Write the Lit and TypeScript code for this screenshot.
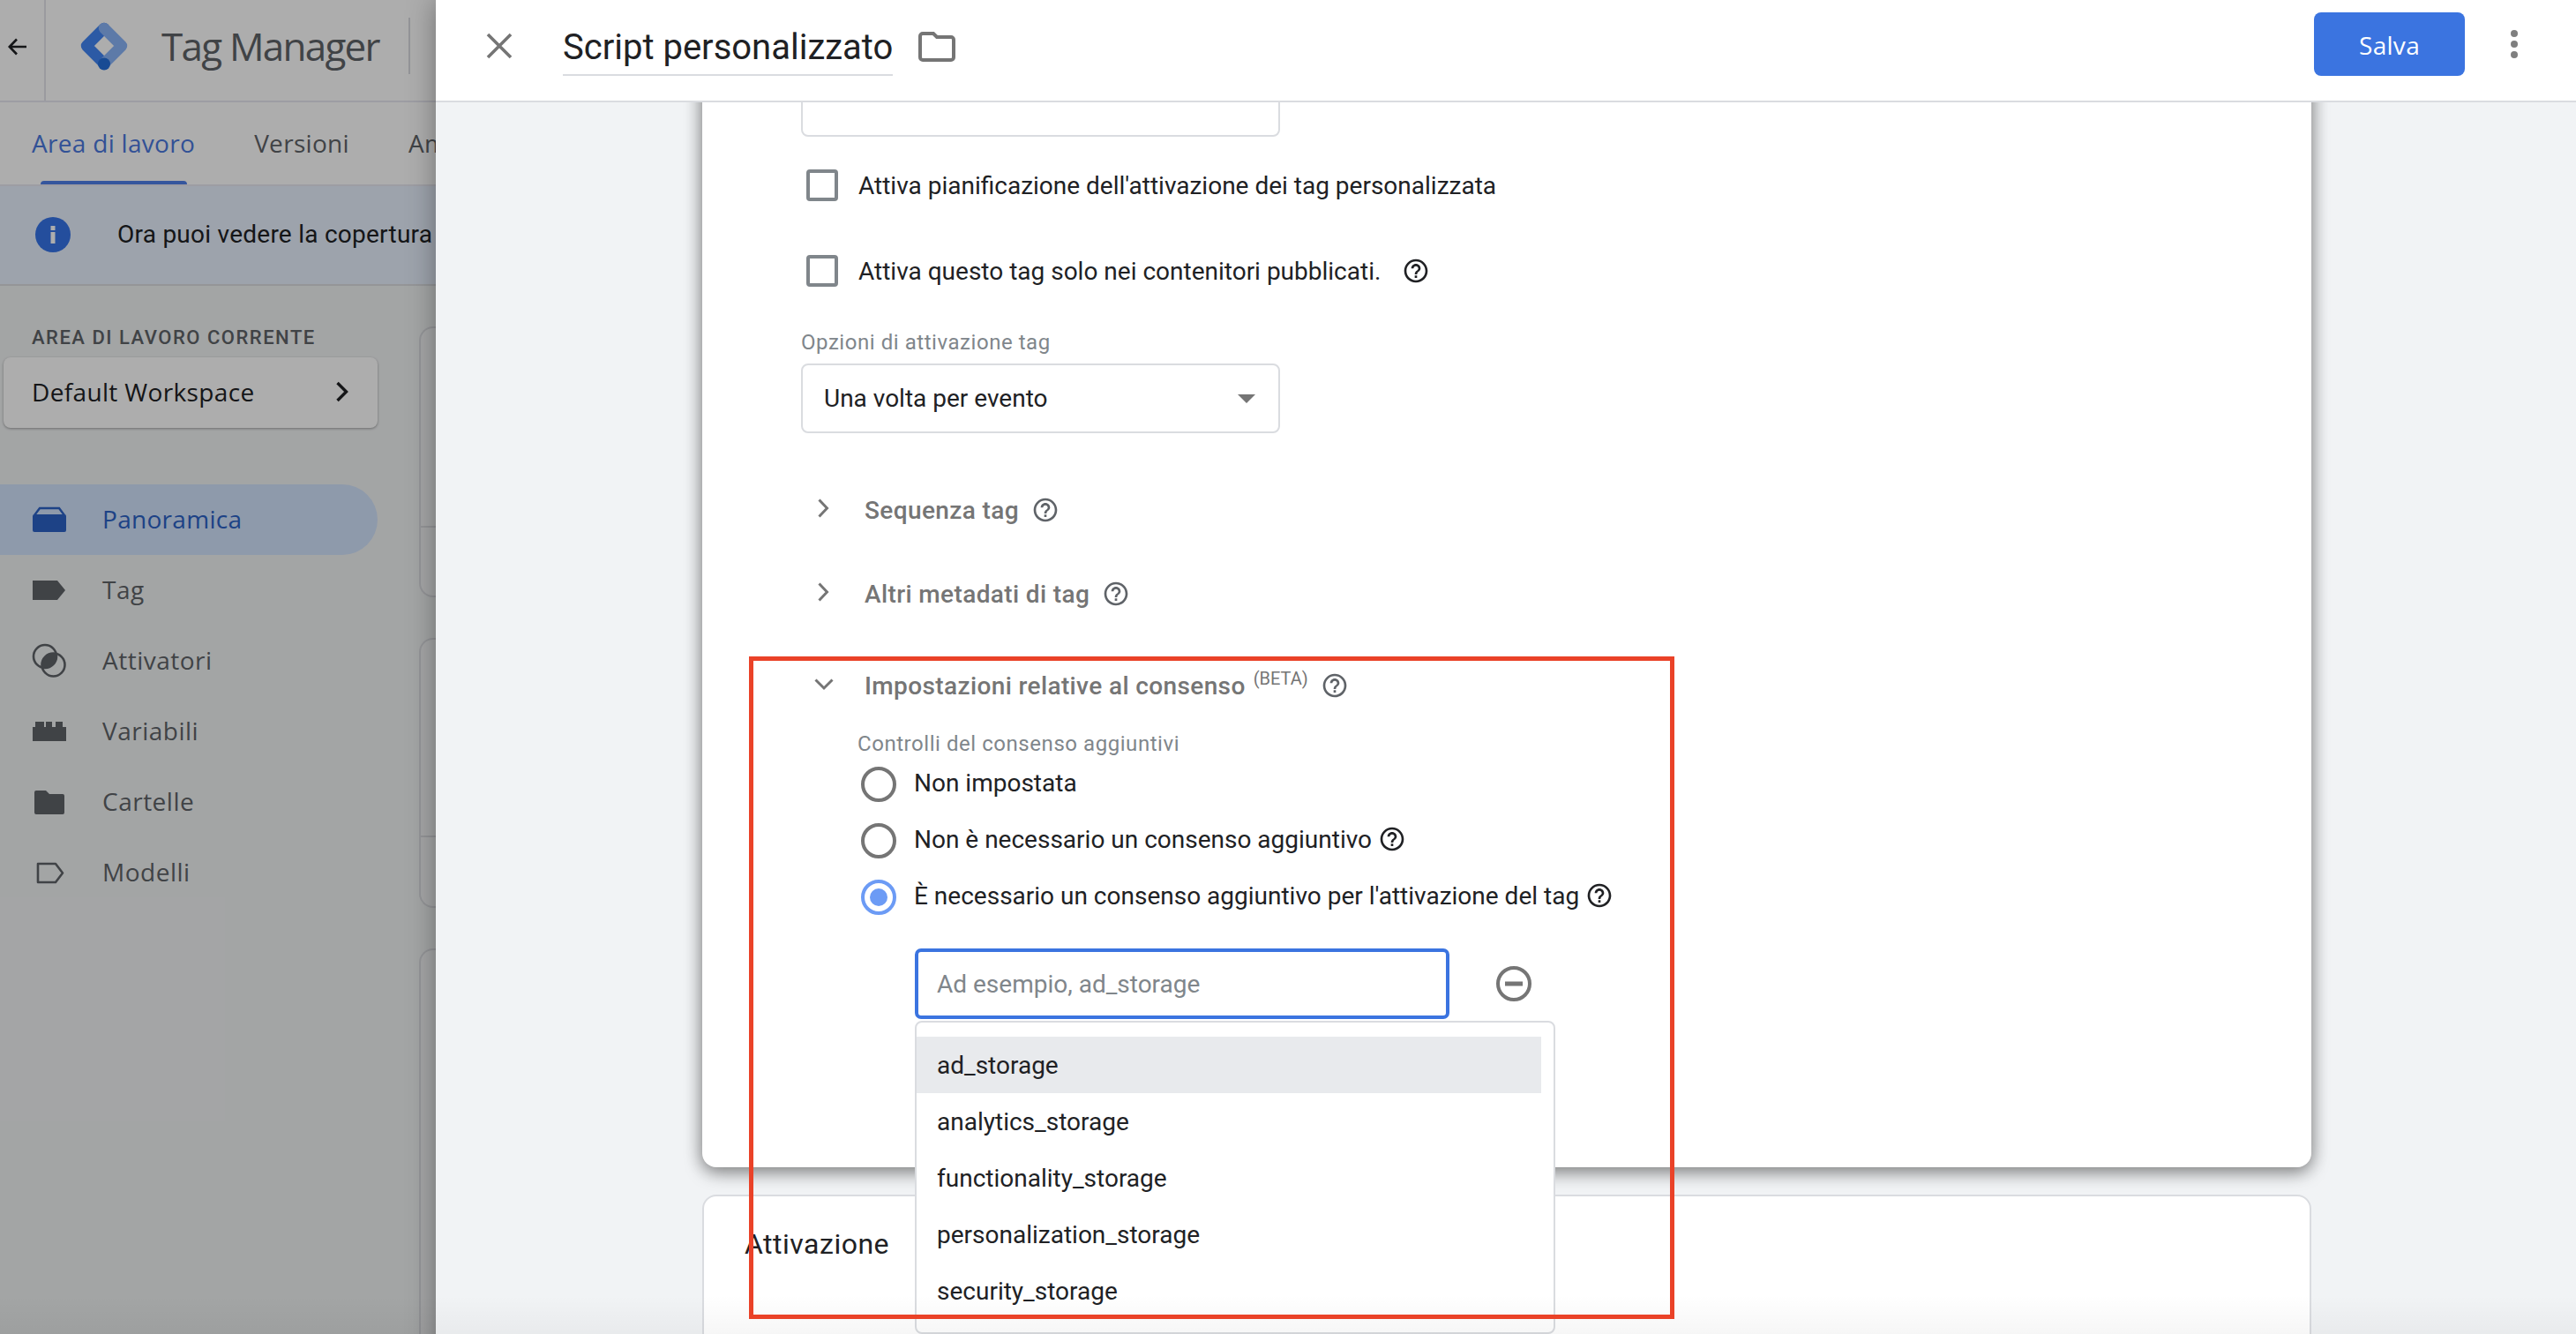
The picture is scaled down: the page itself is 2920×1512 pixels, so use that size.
import { LitElement, html, css, svg } from "lit";
import { customElement } from "lit/decorators.js";

const help = (cls = "") => html`<svg class="help ${cls}" viewBox="0 0 24 24"><path d="M11 18h2v-2h-2v2zm1-16C6.48 2 2 6.48 2 12s4.48 10 10 10 10-4.48 10-10S17.52 2 12 2zm0 18c-4.41 0-8-3.59-8-8s3.59-8 8-8 8 3.59 8 8-3.59 8-8 8zm0-14c-2.21 0-4 1.79-4 4h2c0-1.1.9-2 2-2s2 .9 2 2c0 2-3 1.75-3 5h2c0-2.25 3-2.5 3-5 0-2.21-1.79-4-4-4z"/></svg>`;

const navIcons = {
  overview: svg`<path d="M3 15 L9 7 H31 L37 15" fill="none" stroke="currentColor" stroke-width="2.4"/><rect x="1" y="14" width="38" height="20" rx="2" fill="currentColor"/>`,
  tag: svg`<path d="M1 9 H29 L38 20 L29 31 H1 Z" fill="currentColor"/>`,
  trigger: svg`<circle cx="15" cy="15" r="13" fill="none" stroke="currentColor" stroke-width="2.6"/><circle cx="24.5" cy="24.5" r="13" fill="none" stroke="currentColor" stroke-width="2.6"/><path d="M27.63 11.87 A13 13 0 0 1 11.87 27.63 A13 13 0 0 1 27.63 11.87 Z" fill="currentColor"/>`,
  variable: svg`<path d="M1 15 H4 V9 H14 V15 H16 V9 H23 V15 H27 V9 H35 V15 H39 V31 H1 Z" fill="currentColor"/>`,
  folder: svg`<path d="M5 7 H16 L20 11 H35 a2 2 0 0 1 2 2 V32 a2 2 0 0 1-2 2 H5 a2 2 0 0 1-2-2 V9 a2 2 0 0 1 2-2 Z" fill="currentColor"/>`,
  template: svg`<path d="M7 10 H27 L35 20.5 L27 31 H7 Z" fill="none" stroke="currentColor" stroke-width="2.6" stroke-linejoin="round"/>`,
};

const nav: [keyof typeof navIcons, string][] = [
  ["overview", "Panoramica"],
  ["tag", "Tag"],
  ["trigger", "Attivatori"],
  ["variable", "Variabili"],
  ["folder", "Cartelle"],
  ["template", "Modelli"],
];

const consentTypes = ["ad_storage", "analytics_storage", "functionality_storage", "personalization_storage", "security_storage"];

@customElement("app-root")
export class AppRoot extends LitElement {
  static styles = css`
    :host { display: block; width: 2920px; height: 1512px; overflow: hidden; position: relative; background: #fff; font-family: Roboto, sans-serif; color: #202124; font-size: 28px; }
    * { box-sizing: border-box; }
    .page { display: grid; grid-template-columns: 494px 1fr; width: 100%; height: 100%; }

    /* dimmed background app */
    .bg { position: relative; overflow: hidden; background: #f1f3f4; display: flex; flex-direction: column; font-family: "Open Sans", sans-serif; }
    .dim { position: absolute; inset: 0; background: rgba(0,0,0,.32); z-index: 5; }
    .top { height: 116px; flex: none; background: #fff; border-bottom: 2px solid #e8e8f0; display: flex; align-items: center; width: 700px; }
    .back { width: 52px; height: 114px; flex: none; border-right: 2px solid #e3e3ea; display: flex; align-items: center; justify-content: center; color: #202124; padding-bottom: 8px; }
    .back svg { width: 24px; height: 24px; margin-right: 10px; }
    .logo { width: 58px; height: 58px; margin: -10px 0 0 37px; flex: none; }
    .brand { margin: -10px 0 0 36px; font-size: 44px; color: #5f6368; letter-spacing: -1.75px; white-space: nowrap; width: 280px; }
    .top-div { width: 2px; height: 64px; background: #dadce0; margin-top: -10px; }
    .tabs { height: 95px; flex: none; background: #fff; border-bottom: 2px solid #e8e8f0; display: flex; width: 700px; padding-left: 36px; gap: 67px; align-items: center; font-size: 28px; letter-spacing: .3px; color: #5f6368; font-weight: 500; white-space: nowrap; }
    .tab { position: relative; height: 93px; line-height: 93px; }
    .tab.on { color: #4a78dd; }
    .tab.on::after { content: ""; position: absolute; left: 10px; right: 9px; bottom: 0; height: 4px; background: #4f7fe8; border-radius: 4px 4px 0 0; }
    .banner { height: 113px; flex: none; background: #e8f0fe; border-bottom: 2px solid #dadce0; display: flex; align-items: center; width: 700px; padding: 0 0 2px 40px; font-family: Roboto, sans-serif; white-space: nowrap; letter-spacing: .25px; }
    .banner svg { width: 40px; height: 40px; margin-right: 53px; flex: none; }
    .work { display: flex; flex: 1; min-height: 0; }
    .side { width: 475px; flex: none; padding-top: 46px; }
    .cap { padding-left: 36px; font-size: 22px; line-height: 26px; font-family: Roboto, sans-serif; font-weight: 500; letter-spacing: 1.5px; color: #5f6368; white-space: nowrap; }
    .ws { margin: 9px 0 0 4px; width: 424px; height: 80px; background: #fff; border-radius: 8px; box-shadow: 0 1px 3px rgba(0,0,0,.35); display: flex; align-items: center; justify-content: space-between; padding: 0 32px 2px 32px; font-size: 28px; font-weight: 500; letter-spacing: .35px; color: #202124; white-space: nowrap; }
    .ws svg { width: 16px; height: 26px; }
    .nav { margin-top: 64px; width: 428px; }
    .item { height: 80px; display: flex; align-items: center; padding-left: 36px; color: #5f6368; border-radius: 0 40px 40px 0; font-size: 28px; letter-spacing: .5px; }
    .item span { margin-top: -3px; }
    .item svg { width: 40px; height: 40px; margin-right: 40px; flex: none; }
    .item.on { background: #d2e3fc; color: #2b62c6; font-weight: 500; letter-spacing: .3px; }
    .item.on svg { color: #2b62c6; }
    .cards { flex: 1; display: flex; flex-direction: column; padding-top: 46px; width: 40px; }
    .bgc { width: 60px; flex: none; background: #f4f5f6; border: 2px solid #dadce0; border-right: 0; border-radius: 16px 0 0 16px; position: relative; }
    .bgc.a { height: 307px; }
    .bgc.b { height: 306px; margin-top: 46px; }
    .bgc.c { height: 500px; margin-top: 46px; }
    .bgc i { position: absolute; left: 0; right: 0; height: 2px; background: #dadce0; }

    /* slide-over panel */
    .panel { position: relative; z-index: 6; display: flex; flex-direction: column; background: #f1f3f5; box-shadow: 0 0 30px rgba(0,0,0,.35); min-width: 0; }
    .bar { height: 116px; flex: none; background: #fff; border-bottom: 2px solid #dadce0; display: flex; align-items: center; position: relative; z-index: 3; padding-left: 56px; }
    .close { width: 32px; height: 32px; flex: none; margin-top: -10px; }
    .title { margin-left: 56px; font-size: 40px; line-height: 56px; border-bottom: 2px solid #dadce0; height: 60px; margin-top: -2px; color: #202124; white-space: nowrap; }
    .fold { width: 42px; height: 34px; margin-left: 29px; flex: none; margin-top: -8px; }
    .save { margin-left: auto; width: 171px; height: 72px; margin-top: -14px; background: #3b74e0; color: #fff; border-radius: 8px; display: flex; align-items: center; justify-content: center; font-family: "Open Sans", sans-serif; font-weight: 500; font-size: 28px; letter-spacing: .3px; padding-top: 2px; }
    .kebab { width: 8px; margin: -14px 66px 0 52px; display: flex; flex-direction: column; gap: 4px; flex: none; }
    .kebab i { width: 8px; height: 8px; border-radius: 50%; background: #7f7f7f; }
    .body { flex: 1; min-height: 0; overflow: hidden; padding: 0 300px 0 302px; }
    .card1 { position: relative; z-index: 2; margin-top: -100px; background: #fff; border-radius: 16px; box-shadow: 0 6px 20px rgba(0,0,0,.4), 0 0 20px rgba(0,0,0,.2); padding: 60px 0 168px 112px; height: 1307px; }
    .oldinput { width: 543px; height: 79px; border: 2px solid #dadce0; border-radius: 8px; }
    .check { display: flex; align-items: center; height: 60px; white-space: nowrap; }
    .check.one { margin-top: 25px; }
    .check.two { margin-top: 37px; }
    .box { width: 36px; height: 36px; margin: 0 23px 0 6px; border: 4px solid #80868b; border-radius: 4px; flex: none; }
    .help { width: 32px; height: 32px; fill: #202124; flex: none; display: block; }
    .help.soft { fill: #5f6368; }
    .check .help { margin-left: 24px; }
    .lab { font-size: 24px; line-height: 30px; height: 30px; color: #80868b; margin-top: 36px; white-space: nowrap; letter-spacing: .55px; }
    .select { margin-top: 9px; width: 543px; height: 79px; border: 2px solid #dadce0; border-radius: 8px; display: flex; align-items: center; justify-content: space-between; padding: 0 26px 0 24px; }
    .caret { width: 0; height: 0; border-left: 10px solid transparent; border-right: 10px solid transparent; border-top: 10px solid #757575; }
    .sec { display: flex; align-items: center; height: 60px; font-weight: 500; color: #757575; white-space: nowrap; letter-spacing: .38px; }
    .sec.s1 { margin-top: 57px; }
    .sec.s2 { margin-top: 35px; }
    .sec.s3 { margin-top: 44px; margin-bottom: -1px; }
    .sec .chev { width: 24px; height: 24px; margin: -4px 34px 0 14px; flex: none; }
    .sec .help { margin-left: 14px; }
    sup { font-size: 20px; font-weight: 400; line-height: 0; position: relative; top: -8px; vertical-align: baseline; margin-left: 9px; letter-spacing: 0; }
    .consent { padding-left: 64px; }
    .consent .lab { margin-top: 23px; height: 28px; line-height: 28px; }
    .radio { display: flex; align-items: center; height: 64px; white-space: nowrap; }
    .rd { width: 40px; height: 40px; border-radius: 50%; border: 4px solid #757575; margin: 0 20px 0 4px; flex: none; position: relative; }
    .rd.on { border-color: #6c9bf5; }
    .rd.on::after { content: ""; position: absolute; inset: 6px; border-radius: 50%; background: #6c9bf5; }
    .radio span { margin-top: -4px; }
    .radio .help { margin: -4px 0 0 7px; }
    .inrow { position: relative; display: flex; align-items: center; margin: 26px 0 0 65px; }
    .focus { width: 606px; height: 80px; border: 4px solid #3b74e0; border-radius: 7px; display: flex; align-items: center; padding: 0 0 0 21px; color: #80868b; }
    .minus { width: 48px; height: 48px; margin-left: 49px; flex: none; }
    .menu { position: absolute; left: 0; top: 82px; width: 726px; height: 355px; background: #fff; border: 2px solid #dadce0; border-radius: 8px; padding-top: 16px; overflow: hidden; z-index: 4; }
    .opt { width: 708px; height: 64px; padding-left: 23px; display: flex; align-items: center; color: #202124; }
    .opt.on { background: #e8eaed; }
    .card2 { position: relative; z-index: 1; margin-top: 31px; height: 300px; background: #fff; border: 2px solid #dadce0; border-radius: 16px; padding: 26px 0 0 46px; font-size: 32px; line-height: 56px; letter-spacing: .5px; }
    .shade { position: absolute; left: 0; right: 0; bottom: 0; height: 44px; background: linear-gradient(to bottom, rgba(0,0,0,0), rgba(0,0,0,.035)); z-index: 20; pointer-events: none; }
    .mark { position: absolute; left: 849px; top: 744px; width: 1049px; height: 751px; border: 5px solid #ea4228; z-index: 21; pointer-events: none; }
  `;

  render() {
    return html`
      <div class="page">
        <div class="bg">
          <div class="top">
            <div class="back"><svg viewBox="0 0 24 24"><path d="M22 12H3M11 3.5 2.8 12l8.2 8.500" fill="none" stroke="currentColor" stroke-width="2.600"/></svg></div>
            <svg class="logo" viewBox="0 0 58 58">
              <path d="M29 9 L9 29 L29 49" fill="none" stroke="#4285f4" stroke-width="12.400" stroke-linecap="round" stroke-linejoin="round"/>
              <path d="M29 9 L49 29 L29 49" fill="none" stroke="#8ab4f8" stroke-width="12.400" stroke-linecap="round" stroke-linejoin="round"/>
              <circle cx="29" cy="49.500" r="7" fill="#246fdb"/>
            </svg>
            <div class="brand">Tag Manager</div>
            <div class="top-div"></div>
          </div>
          <div class="tabs">
            <div class="tab on">Area di lavoro</div>
            <div class="tab">Versioni</div>
            <div class="tab">Amministrazione</div>
          </div>
          <div class="banner">
            <svg viewBox="0 0 40 40"><circle cx="20" cy="20" r="20" fill="#3674e8"/><rect x="17.500" y="17" width="5" height="13" fill="#fff"/><rect x="17.500" y="10" width="5" height="5" fill="#fff"/></svg>
            Ora puoi vedere la copertura dei tag
          </div>
          <div class="work">
            <div class="side">
              <div class="cap">AREA DI LAVORO CORRENTE</div>
              <div class="ws">Default Workspace
                <svg viewBox="0 0 16 26"><path d="M2.500 3 12.500 13 2.500 23" fill="none" stroke="#202124" stroke-width="3.400"/></svg>
              </div>
              <div class="nav">
                ${nav.map(([ic, label], i) => html`<div class="item ${i === 0 ? "on" : ""}"><svg viewBox="0 0 40 40">${navIcons[ic]}</svg><span>${label}</span></div>`)}
              </div>
            </div>
            <div class="cards">
              <div class="bgc a"><i style="top: 224px"></i></div>
              <div class="bgc b"><i style="top: 222px"></i></div>
              <div class="bgc c"></div>
            </div>
          </div>
          <div class="dim"></div>
        </div>

        <div class="panel">
          <div class="bar">
            <svg class="close" viewBox="0 0 32 32"><path d="M3 3 29 29M29 3 3 29" fill="none" stroke="#757575" stroke-width="3.600"/></svg>
            <div class="title">Script personalizzato</div>
            <svg class="fold" viewBox="0 0 42 34"><path d="M5 2 H17 L21 6 H37 a3 3 0 0 1 3 3 V29 a3 3 0 0 1-3 3 H5 a3 3 0 0 1-3-3 V5 a3 3 0 0 1 3-3 Z" fill="none" stroke="#757575" stroke-width="4"/></svg>
            <div class="save">Salva</div>
            <div class="kebab"><i></i><i></i><i></i></div>
          </div>
          <div class="body">
            <div class="card1">
              <div class="oldinput"></div>
              <div class="check one"><div class="box"></div>Attiva pianificazione dell'attivazione dei tag personalizzata</div>
              <div class="check two"><div class="box"></div>Attiva questo tag solo nei contenitori pubblicati.${help()}</div>
              <div class="lab">Opzioni di attivazione tag</div>
              <div class="select">Una volta per evento<div class="caret"></div></div>
              <div class="sec s1"><svg class="chev" viewBox="0 0 24 24"><path d="M6.500 2.500 15.500 12 6.500 21.500" fill="none" stroke="#757575" stroke-width="3"/></svg>Sequenza tag${help("soft")}</div>
              <div class="sec s2"><svg class="chev" viewBox="0 0 24 24"><path d="M6.500 2.500 15.500 12 6.500 21.500" fill="none" stroke="#757575" stroke-width="3"/></svg>Altri metadati di tag${help("soft")}</div>
              <div class="sec s3"><svg class="chev" viewBox="0 0 24 24"><path d="M2.500 7.500 12 17 21.500 7.500" fill="none" stroke="#757575" stroke-width="3"/></svg>Impostazioni relative al consenso<sup>(BETA)</sup>${help("soft")}</div>
              <div class="consent">
                <div class="lab">Controlli del consenso aggiuntivi</div>
                <div class="radio"><div class="rd"></div><span>Non impostata</span></div>
                <div class="radio"><div class="rd"></div><span>Non è necessario un consenso aggiuntivo</span>${help()}</div>
                <div class="radio"><div class="rd on"></div><span>È necessario un consenso aggiuntivo per l'attivazione del tag</span>${help()}</div>
                <div class="inrow">
                  <div class="focus">Ad esempio, ad_storage</div>
                  <svg class="minus" viewBox="0 0 48 48"><circle cx="24" cy="24" r="18" fill="none" stroke="#757575" stroke-width="4"/><rect x="14" y="21.500" width="20" height="5" fill="#757575"/></svg>
                  <div class="menu">
                    ${consentTypes.map((t, i) => html`<div class="opt ${i === 0 ? "on" : ""}">${t}</div>`)}
                  </div>
                </div>
              </div>
            </div>
            <div class="card2">Attivazione</div>
          </div>
        </div>
      </div>
      <div class="shade"></div>
      <div class="mark"></div>
    `;
  }
}
